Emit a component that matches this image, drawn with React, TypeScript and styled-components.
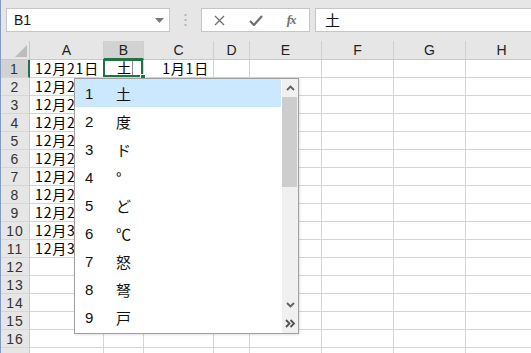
import React from "react";
import styled, { createGlobalStyle } from "styled-components";

const GlobalStyle = createGlobalStyle`
  html, body { margin: 0; padding: 0; background: #fff; overflow: hidden; }
  * { box-sizing: border-box; }
`;

const JP = `"Noto Sans CJK JP", "Noto Sans", sans-serif`;
const UI = `"Liberation Sans", "Noto Sans CJK JP", sans-serif`;

const Frame = styled.div`
  position: relative;
  width: 531px;
  height: 353px;
  overflow: hidden;
  background: #fff;
  border-left: 1px solid #7f9cc4;
`;

const Toolbar = styled.div`
  display: flex;
  align-items: flex-start;
  height: 41px;
  padding: 8px 0 0 5px;
  background: #e6e6e6;
`;

const NameBox = styled.div`
  display: flex;
  align-items: center;
  justify-content: space-between;
  flex: none;
  width: 164px;
  height: 24px;
  background: #fff;
  border: 1px solid #c6c6c6;
  padding: 0 5px 0 7px;
  font: 14px ${UI};
  color: #111;
`;

const Separator = styled.div`
  display: flex;
  align-items: center;
  justify-content: center;
  flex: none;
  width: 31px;
  height: 24px;
`;

const ButtonGroup = styled.div`
  display: flex;
  flex: none;
  width: 109px;
  height: 24px;
  background: #fff;
  border: 1px solid #c6c6c6;
`;

const BarButton = styled.div`
  display: flex;
  align-items: center;
  justify-content: center;
  width: 36px;
  height: 22px;
  color: #6a6a6a;
`;

const FxLabel = styled.span`
  font: italic bold 13px "Liberation Serif", serif;
  color: #707070;
  letter-spacing: -1px;
`;

const FormulaInput = styled.div`
  flex: 1;
  height: 24px;
  margin-left: 5px;
  background: #fff;
  border: 1px solid #c6c6c6;
  border-right: none;
  padding-left: 9px;
  font: 15px/22px ${JP};
  color: #111;
`;

const Sheet = styled.div`
  display: grid;
  grid-template-columns: 29px 74px 40px 70px 36px 72px 72px 72px 72px;
  grid-template-rows: 19px;
  grid-auto-rows: 18px;
`;

const Corner = styled.div`
  position: relative;
  background: #e6e6e6;
  border-right: 1px solid #c8c8c8;
  border-bottom: 1px solid #c8c8c8;
`;

const CornerTriangle = styled.div`
  position: absolute;
  right: 2px;
  bottom: 2px;
  width: 0;
  height: 0;
  border-left: 12px solid transparent;
  border-bottom: 12px solid #bcbcbc;
`;

const ColHeader = styled.div<{ $active?: boolean }>`
  display: flex;
  align-items: center;
  justify-content: center;
  background: ${(p) => (p.$active ? "#d2d2d2" : "#e6e6e6")};
  border-right: 1px solid #cfcfcf;
  border-bottom: ${(p) => (p.$active ? "2px solid #217346" : "1px solid #c8c8c8")};
  font: 14px ${UI};
  color: #222;
  padding-top: ${(p) => (p.$active ? "1px" : "0")};
`;

const RowHeader = styled.div<{ $active?: boolean }>`
  display: flex;
  align-items: center;
  justify-content: center;
  background: ${(p) => (p.$active ? "#d2d2d2" : "#e6e6e6")};
  border-right: ${(p) => (p.$active ? "2px solid #217346" : "1px solid #c8c8c8")};
  border-bottom: 1px solid #d6d6d6;
  font: 14px ${UI};
  color: #333;
  letter-spacing: 1px;
`;

const Cell = styled.div<{ $align?: "left" | "right" | "center" }>`
  position: relative;
  display: flex;
  align-items: center;
  justify-content: ${(p) =>
    p.$align === "right" ? "flex-end" : p.$align === "center" ? "center" : "flex-start"};
  padding: 0 4px 0 4px;
  border-right: 1px solid #d4d4d4;
  border-bottom: 1px solid #d4d4d4;
  font: 14px/17px ${JP};
  letter-spacing: 0.8px;
  color: #000;
  white-space: nowrap;
  overflow: visible;
`;

const SelectedCell = styled(Cell)`
  padding: 0 0 0 13px;
  justify-content: flex-start;
  letter-spacing: 0;
  &::after {
    content: "";
    position: absolute;
    left: -1px;
    top: -1px;
    right: 0;
    bottom: 0;
    border: 2px solid #217346;
    pointer-events: none;
  }
`;

const FillHandle = styled.div`
  position: absolute;
  right: -3px;
  bottom: -3px;
  width: 6px;
  height: 6px;
  background: #217346;
  border: 1px solid #fff;
  z-index: 2;
`;

const Composition = styled.span`
  border-bottom: 2px solid #000;
  line-height: 15px;
`;

const Caret = styled.span`
  display: block;
  width: 1px;
  height: 15px;
  margin-left: 1px;
  background: #8a8a8a;
`;

const Dropdown = styled.div`
  position: absolute;
  left: 73px;
  top: 78px;
  width: 225px;
  height: 256px;
  display: flex;
  background: #fff;
  border: 1px solid #a0a0a0;
  box-shadow: 1px 1px 2px rgba(0, 0, 0, 0.12);
  z-index: 5;
`;

const List = styled.div`
  display: flex;
  flex-direction: column;
  width: 206px;
`;

const Item = styled.div<{ $active?: boolean }>`
  display: flex;
  align-items: center;
  height: 28px;
  padding-left: 10px;
  background: ${(p) => (p.$active ? "#cce8ff" : "transparent")};
  color: #111;
`;

const ItemNum = styled.span`
  width: 31px;
  font: 15px ${UI};
`;

const ItemChar = styled.span`
  font: 15px ${JP};
`;

const Scrollbar = styled.div`
  display: flex;
  flex-direction: column;
  width: 16px;
  margin-left: 1px;
  background: #f0f0f0;
`;

const ScrollButton = styled.div<{ $h: number }>`
  display: flex;
  align-items: center;
  justify-content: center;
  height: ${(p) => p.$h}px;
  flex: none;
`;

const Thumb = styled.div`
  height: 90px;
  margin: 0 1px 0 0;
  background: #cdcdcd;
  flex: none;
`;

const Track = styled.div`
  flex: 1;
`;

const candidates = ["土", "度", "ド", "°", "ど", "℃", "怒", "弩", "戸"];
const columns = ["A", "B", "C", "D", "E", "F", "G", "H"];

const dates: Record<number, string> = {};
for (let i = 1; i <= 11; i++) dates[i] = `12月${20 + i}日`;

const Chevron = ({ up }: { up?: boolean }) => (
  <svg width="9" height="6" viewBox="0 0 9 6">
    <polyline
      points={up ? "1,5 4.5,1.5 8,5" : "1,1 4.5,4.5 8,1"}
      fill="none"
      stroke="#606060"
      strokeWidth="1.8"
    />
  </svg>
);

const DoubleChevron = () => (
  <svg width="11" height="9" viewBox="0 0 11 9">
    <polyline points="1,1 4.5,4.5 1,8" fill="none" stroke="#505050" strokeWidth="1.8" />
    <polyline points="5.5,1 9,4.5 5.5,8" fill="none" stroke="#505050" strokeWidth="1.8" />
  </svg>
);

export default function App() {
  const rows = Array.from({ length: 17 }, (_, i) => i + 1);
  return (
    <>
      <GlobalStyle />
      <Frame>
        <Toolbar>
          <NameBox>
            <span>B1</span>
            <svg width="9" height="5" viewBox="0 0 9 5">
              <polygon points="0,0 9,0 4.5,5" fill="#7a7a7a" />
            </svg>
          </NameBox>
          <Separator>
            <svg width="3" height="12" viewBox="0 0 3 12">
              <rect x="0.5" y="0" width="2" height="2" fill="#b4b4b4" />
              <rect x="0.5" y="5" width="2" height="2" fill="#b4b4b4" />
              <rect x="0.5" y="10" width="2" height="2" fill="#b4b4b4" />
            </svg>
          </Separator>
          <ButtonGroup>
            <BarButton>
              <svg width="11" height="11" viewBox="0 0 11 11">
                <path d="M1 1 L10 10 M10 1 L1 10" stroke="#707070" strokeWidth="1.3" fill="none" />
              </svg>
            </BarButton>
            <BarButton>
              <svg width="14" height="11" viewBox="0 0 14 11">
                <path d="M1 6 L5 10 L13 1" stroke="#707070" strokeWidth="2.2" fill="none" />
              </svg>
            </BarButton>
            <BarButton>
              <FxLabel>fx</FxLabel>
            </BarButton>
          </ButtonGroup>
          <FormulaInput>土</FormulaInput>
        </Toolbar>
        <Sheet>
          <Corner>
            <CornerTriangle />
          </Corner>
          {columns.map((c) => (
            <ColHeader key={c} $active={c === "B"}>
              {c}
            </ColHeader>
          ))}
          {rows.map((r) => (
            <React.Fragment key={r}>
              <RowHeader $active={r === 1}>{r <= 16 ? r : ""}</RowHeader>
              <Cell $align="right">{dates[r] ?? ""}</Cell>
              {r === 1 ? (
                <SelectedCell>
                  <Composition>土</Composition>
                  <Caret />
                  <FillHandle />
                </SelectedCell>
              ) : (
                <Cell />
              )}
              <Cell $align="right">{r === 1 ? "1月1日" : ""}</Cell>
              <Cell />
              <Cell />
              <Cell />
              <Cell />
              <Cell />
            </React.Fragment>
          ))}
        </Sheet>
        <Dropdown>
          <List>
            {candidates.map((ch, i) => (
              <Item key={i} $active={i === 0}>
                <ItemNum>{i + 1}</ItemNum>
                <ItemChar>{ch}</ItemChar>
              </Item>
            ))}
          </List>
          <Scrollbar>
            <ScrollButton $h={18}>
              <Chevron up />
            </ScrollButton>
            <Thumb />
            <Track />
            <ScrollButton $h={16}>
              <Chevron />
            </ScrollButton>
            <ScrollButton $h={20}>
              <DoubleChevron />
            </ScrollButton>
          </Scrollbar>
        </Dropdown>
      </Frame>
    </>
  );
}
